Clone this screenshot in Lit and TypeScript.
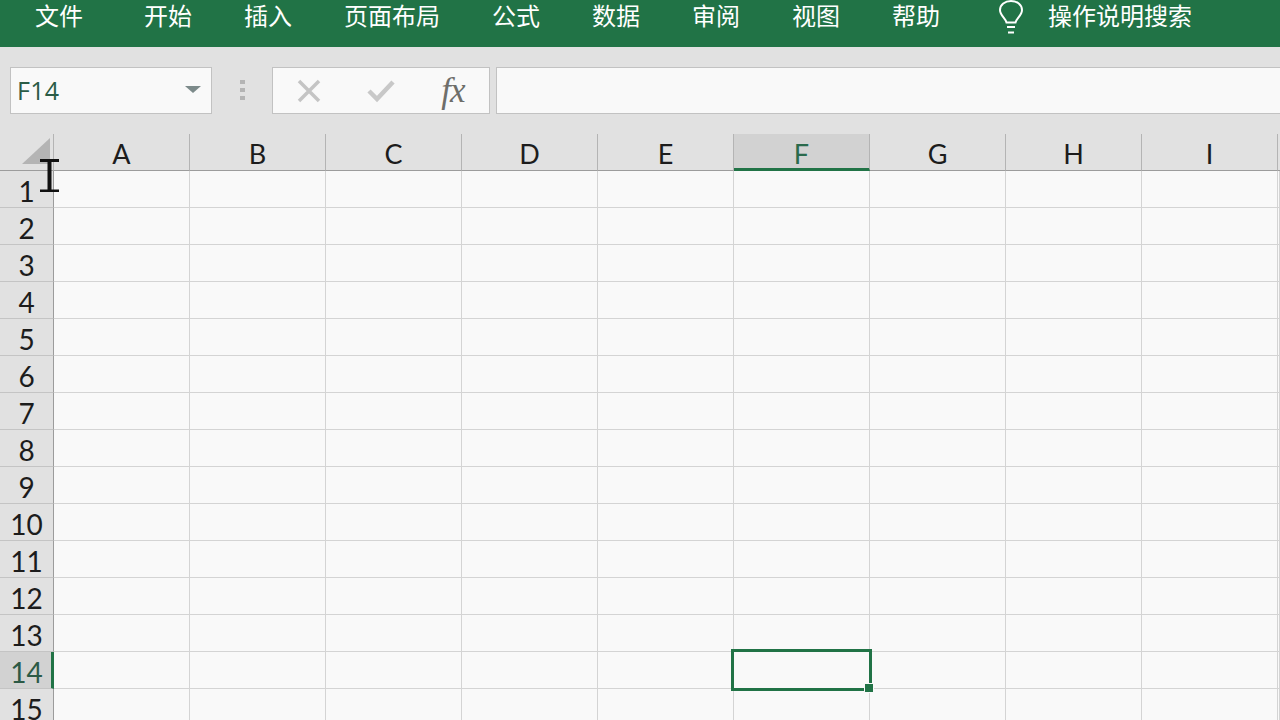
import { LitElement, html, css, svg } from "lit";
import { customElement } from "lit/decorators.js";

const TABS = ["开始", "插入", "页面布局", "公式", "数据", "审阅", "视图", "帮助"];
const COLS = ["A", "B", "C", "D", "E", "F", "G", "H", "I", ""];
const ROWS = Array.from({ length: 15 }, (_, i) => i + 1);

@customElement("app-root")
export class AppRoot extends LitElement {
  static styles = css`
    :host {
      display: block;
      width: 1280px;
      height: 720px;
      overflow: hidden;
      background: #e1e1e1;
      font-family: "Lato", "Noto Sans CJK SC", sans-serif;
      color: #1c1c1c;
    }
    .ribbon {
      height: 47px;
      box-sizing: border-box;
      background: #217346;
      color: #fff;
      display: flex;
      align-items: flex-start;
      padding-left: 35px;
      gap: 52px;
      font-family: "Noto Sans CJK SC", sans-serif;
      font-size: 24px;
      line-height: 30px;
      white-space: nowrap;
    }
    .file { margin-right: 9px; }
    .search { display: flex; gap: 24px; margin-left: 6px; }
    .bulb { width: 26px; height: 36px; display: block; }
    .bar {
      height: 87px;
      box-sizing: border-box;
      padding: 20px 0 0 10px;
      display: flex;
      align-items: flex-start;
    }
    .box {
      height: 47px;
      box-sizing: border-box;
      border: 1px solid #c2c2c2;
      background: #f9f9f9;
    }
    .name {
      width: 202px;
      display: flex;
      align-items: center;
      justify-content: space-between;
      padding: 0 10px 2px 6px;
      font-family: "Open Sans", sans-serif;
      font-size: 25px;
      letter-spacing: 0.3px;
      color: #2a5c46;
    }
    .caret {
      width: 0;
      height: 0;
      border-left: 8px solid transparent;
      border-right: 8px solid transparent;
      border-top: 7px solid #7c8a8a;
    }
    .dots {
      width: 60px;
      display: flex;
      flex-direction: column;
      align-items: center;
      gap: 4px;
      padding-top: 13px;
    }
    .dots i { width: 5px; height: 4px; background: #b4b4b4; display: block; }
    .fns {
      width: 218px;
      display: grid;
      grid-template-columns: repeat(3, 72px);
      align-items: center;
      justify-items: center;
    }
    .fns svg { display: block; }
    .fx {
      font-family: "Liberation Serif", serif;
      font-style: italic;
      font-size: 35px;
      line-height: 40px;
      color: #6e6e6a;
      letter-spacing: -1px;
    }
    .formula { flex: 1; margin-left: 6px; margin-right: -2px; }
    .sheet {
      position: relative;
      display: grid;
      grid-template-columns: 54px repeat(9, 136px) 1fr;
      grid-auto-rows: 37px;
      background: #f9f9f9;
    }
    .cell {
      box-sizing: border-box;
      border-right: 1px solid #d4d4d4;
      border-bottom: 1px solid #d4d4d4;
    }
    .ch {
      box-sizing: border-box;
      background: #e1e1e1;
      border-right: 1px solid #b4b4b4;
      border-bottom: 1px solid #9c9c9c;
      font-size: 27px;
      line-height: 39px;
      text-align: center;
    }
    .ch.on {
      background: #d2d2d2;
      border-bottom: 3px solid #217346;
      color: #2a6a4c;
    }
    .ch.last { border-right: 0; }
    .corner { position: relative; }
    .tri {
      position: absolute;
      left: 22px;
      top: 4px;
      display: block;
    }
    .rh {
      box-sizing: border-box;
      background: #e1e1e1;
      border-right: 1px solid #9c9c9c;
      border-bottom: 1px solid #c4c4c4;
      font-size: 28px;
      line-height: 41px;
      text-align: center;
      overflow: hidden;
    }
    .rh.on {
      background: #d2d2d2;
      border-right: 3px solid #217346;
      color: #2c5a46;
      padding-left: 2px;
    }
    .sel {
      position: absolute;
      left: 731px;
      top: 515px;
      width: 141px;
      height: 42px;
      box-sizing: border-box;
      border: 3px solid #217346;
    }
    .handle {
      position: absolute;
      right: -4px;
      bottom: -4px;
      width: 8px;
      height: 8px;
      background: #217346;
      outline: 1px solid #f9f9f9;
    }
    .ibeam {
      position: absolute;
      left: 40px;
      top: 25px;
      display: block;
    }
  `;

  private bulb() {
    return svg`<svg class="bulb" viewBox="0 0 26 36" fill="none" stroke="#fff" stroke-width="2">
      <path d="M8.500 22.500 C7.500 18 2 15.500 2 10 C2 4.500 7 1 13 1 C19 1 24 4.500 24 10 C24 15.500 18.500 18 17.500 22.500 Z"/>
      <path d="M9 27 H17 M10 32.500 H16"/>
    </svg>`;
  }

  render() {
    return html`
      <div class="ribbon">
        <span class="file">文件</span>
        ${TABS.map((t) => html`<span>${t}</span>`)}
        <span class="search">${this.bulb()}<span>操作说明搜索</span></span>
      </div>
      <div class="bar">
        <div class="box name"><span>F14</span><span class="caret"></span></div>
        <div class="dots"><i></i><i></i><i></i></div>
        <div class="box fns">
          <svg width="26" height="26" viewBox="0 0 26 26" fill="none" stroke="#c4c4c4" stroke-width="3.500">
            <path d="M3 3 L23 23 M23 3 L3 23"/>
          </svg>
          <svg width="28" height="24" viewBox="0 0 28 24" fill="none" stroke="#c8c8c8" stroke-width="4.500">
            <path d="M2 12 L10 20 L26 3"/>
          </svg>
          <span class="fx">fx</span>
        </div>
        <div class="box formula"></div>
      </div>
      <div class="sheet">
        <div class="ch corner">
          <svg class="tri" width="28" height="26" viewBox="0 0 28 26"><path d="M0 26 L28 0 V26 Z" fill="#b4b4b4"/></svg>
        </div>
        ${COLS.map(
          (c, i) =>
            html`<div class="ch ${c === "F" ? "on" : ""} ${i === 9 ? "last" : ""}">${c}</div>`
        )}
        ${ROWS.map(
          (r) => html`
            <div class="rh ${r === 14 ? "on" : ""}">${r}</div>
            ${COLS.map(() => html`<div class="cell"></div>`)}
          `
        )}
        <div class="sel"><div class="handle"></div></div>
        <svg class="ibeam" width="20" height="33" viewBox="0 0 20 33" fill="none" stroke="#111" stroke-width="3">
          <path d="M0 1.500 H19 M0 32 H19" />
          <path d="M9.500 1.500 V32" stroke-width="4" />
        </svg>
      </div>
    `;
  }
}
